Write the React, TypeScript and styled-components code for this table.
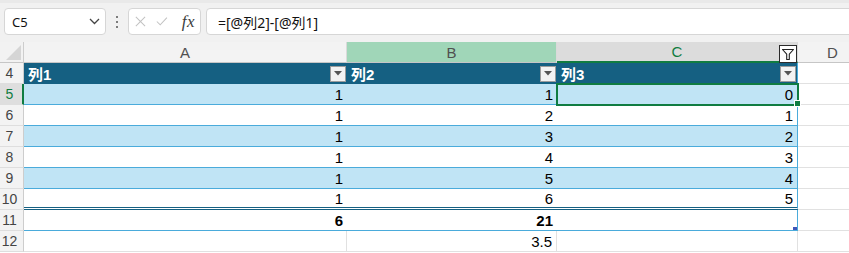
import React from "react";
import styled, { createGlobalStyle } from "styled-components";

const GlobalStyle = createGlobalStyle`
	html, body {
		margin: 0;
		background: #ffffff;
	}
	body {
		font-family: "Liberation Sans", "Noto Sans CJK JP", sans-serif;
		overflow: hidden;
	}
`;

const Page = styled.div`
	width: 849px;
	height: 253px;
	overflow: hidden;
	display: flex;
	flex-direction: column;
`;

/* ---------- formula bar ---------- */

const Toolbar = styled.div`
	display: flex;
	align-items: stretch;
	height: 42px;
	box-sizing: border-box;
	padding: 5px 0 7px 4px;
	background: #f1f1f1;
	border-top: 3px solid #e9e9e9;
`;

const Box = styled.div`
	display: flex;
	align-items: center;
	box-sizing: border-box;
	background: #ffffff;
	border: 1px solid #d6d6d6;
	border-radius: 4px;
`;

const NameBox = styled(Box)`
	width: 102px;
	padding: 0 5px 0 7px;
	justify-content: space-between;
	font-family: "Noto Sans", sans-serif;
	font-size: 13px;
	color: #111;
`;

const Dots = styled.div`
	width: 22px;
	display: flex;
	flex-direction: column;
	align-items: center;
	justify-content: center;
	gap: 3px;

	span {
		width: 2px;
		height: 2px;
		border-radius: 1px;
		background: #555;
	}
`;

const FxBox = styled(Box)`
	width: 73px;
	padding: 0 5px 0 6px;
	gap: 10px;
`;

const FxLabel = styled.span`
	margin-left: 4px;
	font-family: "Liberation Serif", serif;
	font-style: italic;
	font-size: 17px;
	color: #3c3c3c;
	letter-spacing: 0.5px;
`;

const FormulaBox = styled(Box)`
	flex: 1;
	margin-left: 5px;
	margin-right: -10px;
	padding-left: 11px;
	font-family: "Noto Sans", "Noto Sans CJK JP", sans-serif;
	font-size: 14px;
	color: #111;
`;

/* ---------- sheet ---------- */

const Sheet = styled.div`
	display: grid;
	grid-template-columns: 24px 323px 210px 241px 70px;
	grid-auto-rows: 21px;
	font-size: 15px;
	color: #000;
`;

const Corner = styled.div`
	box-sizing: border-box;
	background: #f2f2f2;
	border-right: 1px solid #cdcdcd;
	border-bottom: 1px solid #c6c6c6;
	display: flex;
	align-items: flex-end;
	justify-content: flex-end;
	padding: 0 2px 2px 0;
`;

type HeadState = "normal" | "ref" | "active";

const ColHead = styled.div<{ $state?: HeadState }>`
	position: relative;
	box-sizing: border-box;
	display: flex;
	align-items: center;
	justify-content: center;
	font-size: 15px;
	background: ${({ $state }) =>
		$state === "ref" ? "#a0d6b8" : $state === "active" ? "#dcdcdc" : "#f3f3f3"};
	color: ${({ $state }) => ($state === "active" ? "#107c41" : "#505050")};
	border-right: 1px solid #dadada;
	border-bottom: ${({ $state }) =>
		$state === "active" ? "2px solid #107c41" : "1px solid #c6c6c6"};
`;

const FilterButton = styled.div`
	position: absolute;
	right: 0;
	top: 3px;
	width: 18px;
	height: 18px;
	box-sizing: border-box;
	background: #ffffff;
	border: 1px solid #2b2b2b;
	display: flex;
	align-items: center;
	justify-content: center;
	z-index: 3;
`;

const RowHead = styled.div<{ $active?: boolean }>`
	box-sizing: border-box;
	display: flex;
	align-items: center;
	justify-content: center;
	padding-right: ${({ $active }) => ($active ? "3px" : "4px")};
	font-size: 14px;
	background: ${({ $active }) => ($active ? "#dedede" : "#f3f3f3")};
	color: ${({ $active }) => ($active ? "#107c41" : "#444")};
	border-right: ${({ $active }) => ($active ? "2px solid #107c41" : "1px solid #cdcdcd")};
	border-bottom: 1px solid #dedede;
`;

const TableHead = styled.div<{ $edge?: boolean }>`
	box-sizing: border-box;
	display: flex;
	align-items: center;
	padding: 0 1px 0 4px;
	background: #156082;
	color: #ffffff;
	font-weight: bold;
	font-size: 15px;
	border-right: ${({ $edge }) => ($edge ? "1px solid #4aabdb" : "none")};
`;

const DropButton = styled.div`
	margin-left: auto;
	width: 16px;
	height: 16px;
	box-sizing: border-box;
	background: #f3f3f3;
	border: 1px solid #9c9c9c;
	display: flex;
	align-items: center;
	justify-content: center;
`;

type Rule = "line" | "double";

const Cell = styled.div<{ $band?: boolean; $edge?: boolean; $bold?: boolean; $rule?: Rule }>`
	box-sizing: border-box;
	display: flex;
	align-items: center;
	justify-content: flex-end;
	padding: 1px 4px 0 0;
	background: ${({ $band }) => ($band ? "#c0e4f5" : "#ffffff")};
	font-weight: ${({ $bold }) => ($bold ? "bold" : "normal")};
	border-bottom: ${({ $rule }) =>
		$rule === "double" ? "3px double #156082" : "1px solid #4aabdb"};
	border-right: ${({ $edge }) => ($edge ? "1px solid #4aabdb" : "none")};
`;

const ActiveCell = styled(Cell)`
	position: relative;
	z-index: 2;
	outline: 2px solid #107c41;
	outline-offset: -1px;

	&::after {
		content: "";
		position: absolute;
		right: -4px;
		bottom: -3px;
		width: 5px;
		height: 5px;
		background: #107c41;
		border: 1px solid #ffffff;
	}
`;

const TotalEdge = styled(Cell)`
	position: relative;

	&::after {
		content: "";
		position: absolute;
		right: 0;
		bottom: 0;
		width: 4px;
		height: 3px;
		background: #3f56b8;
	}
`;

const Plain = styled.div<{ $edge?: boolean }>`
	box-sizing: border-box;
	display: flex;
	align-items: center;
	justify-content: flex-end;
	padding: 1px 4px 0 0;
	background: #ffffff;
	border-bottom: 1px solid #e1e1e1;
	border-right: ${({ $edge }) => ($edge ? "1px solid #e1e1e1" : "none")};
`;

const ChevronDown = () => (
	<svg width="11" height="7" viewBox="0 0 11 7">
		<polyline points="1,1 5.5,5.5 10,1" fill="none" stroke="#444" strokeWidth="1.3" />
	</svg>
);

const Cross = () => (
	<svg width="13" height="13" viewBox="0 0 13 13">
		<path d="M1 1L12 12M12 1L1 12" stroke="#c2c2c2" strokeWidth="1.2" />
	</svg>
);

const Check = () => (
	<svg width="14" height="11" viewBox="0 0 14 11">
		<polyline points="1,5.5 5,9.5 13,1" fill="none" stroke="#c2c2c2" strokeWidth="1.2" />
	</svg>
);

const Arrow = () => (
	<svg width="8" height="5" viewBox="0 0 8 5">
		<polygon points="0,0 8,0 4,4.5" fill="#555" />
	</svg>
);

const Funnel = () => (
	<svg width="14" height="14" viewBox="0 0 14 14">
		<path
			d="M1.5 2.5H12.5L8.3 7.2V12.5H5.7V7.2Z"
			fill="none"
			stroke="#222"
			strokeWidth="1.1"
			strokeLinejoin="round"
		/>
	</svg>
);

const CornerMark = () => (
	<svg width="15" height="15" viewBox="0 0 15 15">
		<polygon points="15,0 15,15 0,15" fill="#d5d5d5" />
	</svg>
);

interface Row {
	n: number;
	a: number;
	b: number;
	c: number;
}

const rows: Row[] = [
	{ n: 5, a: 1, b: 1, c: 0 },
	{ n: 6, a: 1, b: 2, c: 1 },
	{ n: 7, a: 1, b: 3, c: 2 },
	{ n: 8, a: 1, b: 4, c: 3 },
	{ n: 9, a: 1, b: 5, c: 4 },
	{ n: 10, a: 1, b: 6, c: 5 },
];

const App: React.FC = () => {
	return (
		<Page>
			<GlobalStyle />
			<Toolbar>
				<NameBox>
					<span>C5</span>
					<ChevronDown />
				</NameBox>
				<Dots>
					<span />
					<span />
					<span />
				</Dots>
				<FxBox>
					<Cross />
					<Check />
					<FxLabel>fx</FxLabel>
				</FxBox>
				<FormulaBox>=[@列2]-[@列1]</FormulaBox>
			</Toolbar>

			<Sheet>
				<Corner>
					<CornerMark />
				</Corner>
				<ColHead>A</ColHead>
				<ColHead $state="ref">B</ColHead>
				<ColHead $state="active">
					C
					<FilterButton>
						<Funnel />
					</FilterButton>
				</ColHead>
				<ColHead>D</ColHead>

				<RowHead>4</RowHead>
				<TableHead>
					列1
					<DropButton>
						<Arrow />
					</DropButton>
				</TableHead>
				<TableHead>
					列2
					<DropButton>
						<Arrow />
					</DropButton>
				</TableHead>
				<TableHead $edge>
					列3
					<DropButton>
						<Arrow />
					</DropButton>
				</TableHead>
				<Plain $edge />

				{rows.map((r, i) => {
					const band = i % 2 === 0;
					const rule: Rule = i === rows.length - 1 ? "double" : "line";
					return (
						<React.Fragment key={r.n}>
							<RowHead $active={r.n === 5}>{r.n}</RowHead>
							<Cell $band={band} $rule={rule}>{r.a}</Cell>
							<Cell $band={band} $rule={rule}>{r.b}</Cell>
							{r.n === 5 ? (
								<ActiveCell $band={band} $rule={rule} $edge>{r.c}</ActiveCell>
							) : (
								<Cell $band={band} $rule={rule} $edge>{r.c}</Cell>
							)}
							<Plain $edge />
						</React.Fragment>
					);
				})}

				<RowHead>11</RowHead>
				<Cell $bold>6</Cell>
				<Cell $bold>21</Cell>
				<TotalEdge $edge />
				<Plain $edge />

				<RowHead>12</RowHead>
				<Plain $edge />
				<Plain $edge>3.5</Plain>
				<Plain $edge />
				<Plain $edge />
			</Sheet>
		</Page>
	);
};

export default App;
